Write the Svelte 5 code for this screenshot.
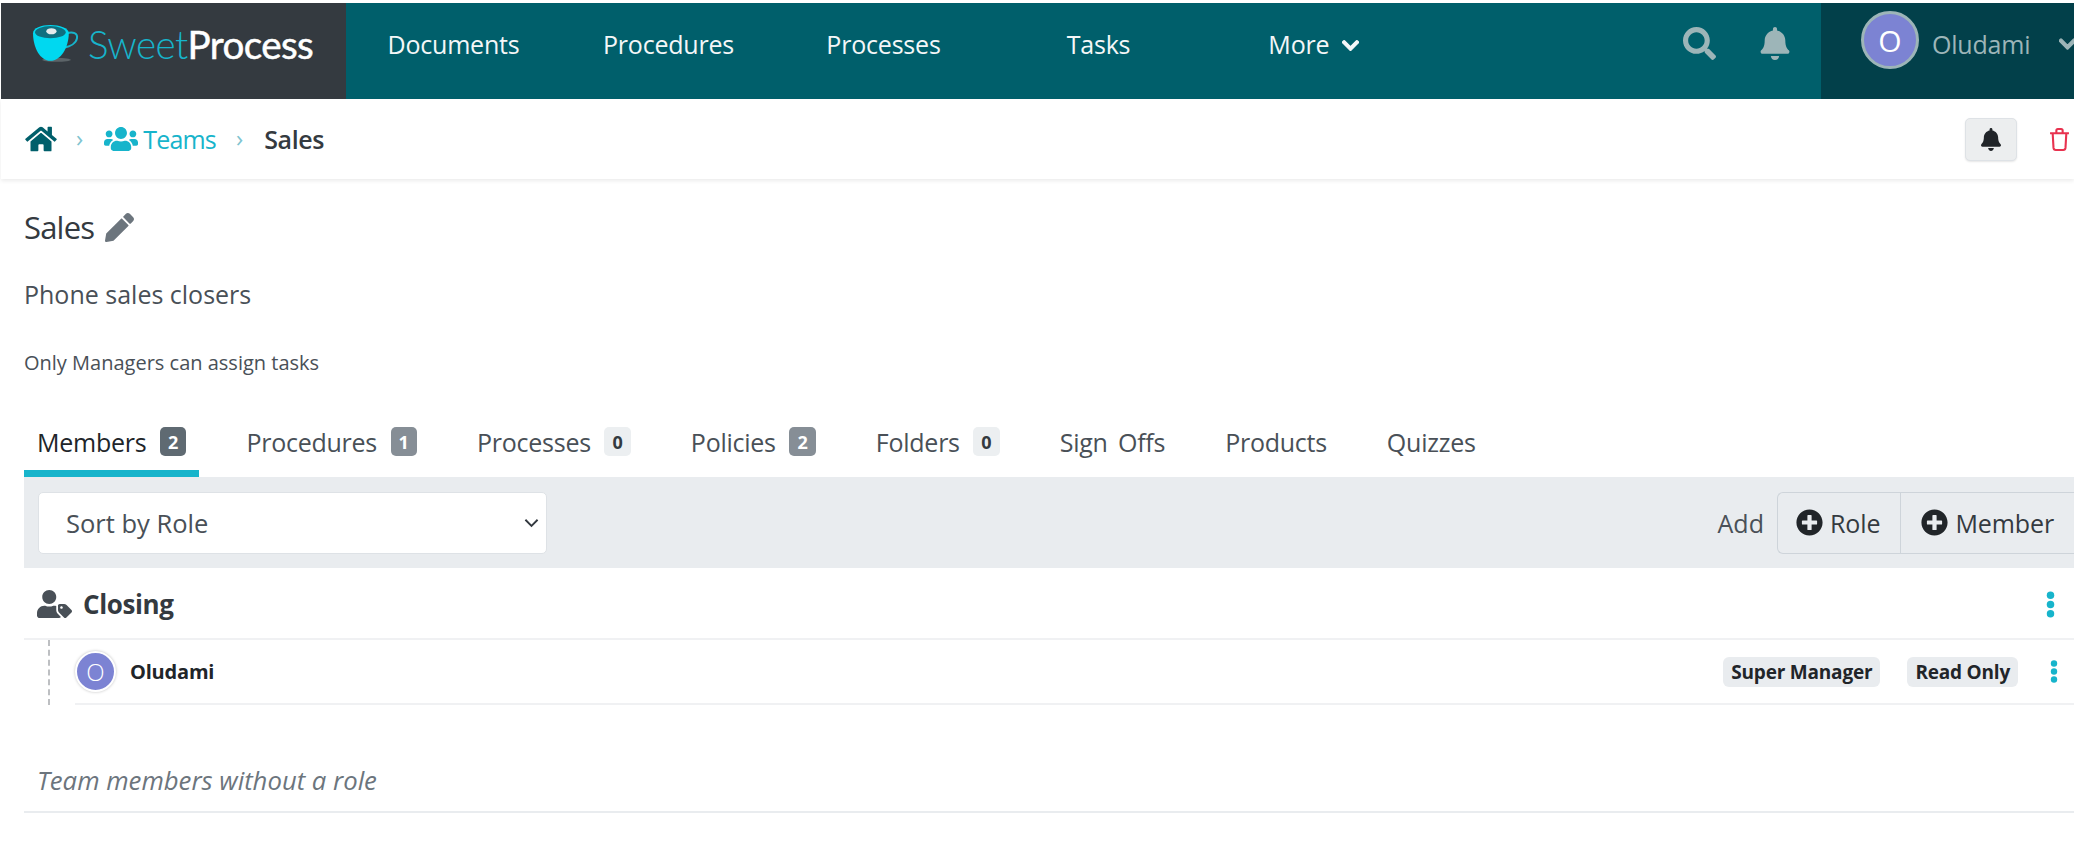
<script lang="ts">
  const paths: Record<string, [number, string]> = {
    home: [576, "M280.37 148.26L96 300.11V464a16 16 0 0 0 16 16l112.06-.29a16 16 0 0 0 15.92-16V368a16 16 0 0 1 16-16h64a16 16 0 0 1 16 16v95.64a16 16 0 0 0 16 16.05L464 480a16 16 0 0 0 16-16V300L295.67 148.26a12.19 12.19 0 0 0-15.3 0zM571.6 251.47L488 182.56V44.05a12 12 0 0 0-12-12h-56a12 12 0 0 0-12 12v72.61L318.47 43a48 48 0 0 0-61 0L4.34 251.47a12 12 0 0 0-1.6 16.9l25.5 31A12 12 0 0 0 45.15 301l235.22-193.74a12.19 12.19 0 0 1 15.3 0L530.9 301a12 12 0 0 0 16.9-1.6l25.5-31a12 12 0 0 0-1.7-16.93z"],
    users: [640, "M96 224c35.3 0 64-28.7 64-64s-28.7-64-64-64-64 28.7-64 64 28.7 64 64 64zm448 0c35.3 0 64-28.7 64-64s-28.7-64-64-64-64 28.7-64 64 28.7 64 64 64zm32 32h-64c-17.6 0-33.5 7.1-45.1 18.6 40.3 22.1 68.9 62 75.1 109.4h66c17.7 0 32-14.3 32-32v-32c0-35.3-28.7-64-64-64zm-256 0c61.9 0 112-50.1 112-112S381.9 32 320 32 208 82.1 208 144s50.1 112 112 112zm76.8 32h-8.3c-20.8 10-43.9 16-68.5 16s-47.6-6-68.5-16h-8.3C179.6 288 128 339.6 128 403.2V432c0 26.5 21.5 48 48 48h288c26.5 0 48-21.5 48-48v-28.8c0-63.6-51.6-115.2-115.2-115.2zm-223.7-13.4C161.5 263.1 145.6 256 128 256H64c-35.3 0-64 28.7-64 64v32c0 17.7 14.3 32 32 32h65.9c6.3-47.4 34.9-87.3 75.2-109.4z"],
    bell: [448, "M224 512c35.32 0 63.97-28.65 63.97-64H160.03c0 35.35 28.65 64 63.97 64zm215.39-149.71c-19.32-20.76-55.47-51.99-55.47-154.29 0-77.7-54.48-139.9-127.94-155.16V32c0-17.67-14.32-32-31.98-32s-31.98 14.33-31.98 32v20.84C118.56 68.1 64.08 130.3 64.08 208c0 102.3-36.15 133.53-55.47 154.29-6 6.45-8.66 14.16-8.61 21.71.11 16.4 12.98 32 32.1 32h383.8c19.12 0 32-15.6 32.1-32 .05-7.55-2.61-15.27-8.61-21.71z"],
    search: [512, "M505 442.7L405.3 343c-4.5-4.5-10.6-7-17-7H372c27.6-35.3 44-79.7 44-128C416 93.1 322.9 0 208 0S0 93.1 0 208s93.1 208 208 208c48.3 0 92.7-16.4 128-44v16.3c0 6.4 2.5 12.5 7 17l99.7 99.7c9.4 9.4 24.6 9.4 33.9 0l28.3-28.3c9.4-9.4 9.4-24.6.1-34zM208 336c-70.7 0-128-57.2-128-128 0-70.7 57.2-128 128-128 70.7 0 128 57.2 128 128 0 70.7-57.2 128-128 128z"],
    pencil: [512, "M497.9 142.1l-46.1 46.1c-4.7 4.7-12.3 4.7-17 0l-111-111c-4.7-4.7-4.7-12.3 0-17l46.1-46.1c18.7-18.7 49.1-18.7 67.9 0l60.1 60.1c18.8 18.7 18.8 49.1 0 67.9zM284.2 99.8L21.6 362.4.4 483.9c-2.9 16.4 11.4 30.6 27.8 27.8l121.5-21.3 262.6-262.6c4.7-4.7 4.7-12.3 0-17l-111-111c-4.8-4.7-12.4-4.7-17.1 0z"],
    plus: [512, "M256 8C119 8 8 119 8 256s111 248 248 248 248-111 248-248S393 8 256 8zm144 276c0 6.6-5.4 12-12 12h-92v92c0 6.6-5.4 12-12 12h-56c-6.6 0-12-5.4-12-12v-92h-92c-6.6 0-12-5.4-12-12v-56c0-6.6 5.4-12 12-12h92v-92c0-6.6 5.4-12 12-12h56c6.6 0 12 5.4 12 12v92h92c6.6 0 12 5.4 12 12v56z"],
    usertag: [640, "M630.6 364.9l-90.3-90.2c-12-12-28.3-18.7-45.3-18.7h-79.3c-17.7 0-32 14.3-32 32v79.2c0 17 6.7 33.2 18.7 45.2l90.3 90.2c12.5 12.5 32.8 12.5 45.3 0l92.5-92.5c12.6-12.5 12.6-32.7.1-45.2zm-182.8-21c-13.3 0-24-10.7-24-24s10.7-24 24-24 24 10.7 24 24c0 13.2-10.7 24-24 24zm-223.8-88c70.7 0 128-57.3 128-128C352 57.3 294.7 0 224 0S96 57.3 96 128c0 70.6 57.3 127.9 128 127.9zm127.8 111.2V294c-12.2-3.6-24.9-6.2-38.2-6.2h-16.7c-22.2 10.2-46.9 16-72.9 16s-50.6-5.8-72.9-16h-16.7C60.2 288 0 348.2 0 422.4V464c0 26.5 21.5 48 48 48h352c15.5 0 29.1-7.5 37.9-18.9l-58-58c-18.1-18.1-28.1-42.2-28.1-67.9z"],
    chevron: [448, "M207.029 381.476L12.686 187.132c-9.373-9.373-9.373-24.569 0-33.941l22.667-22.667c9.357-9.357 24.522-9.375 33.901-.04L224 284.505l154.745-154.021c9.379-9.335 24.544-9.317 33.901.04l22.667 22.667c9.373 9.373 9.373 24.569 0 33.941L240.971 381.476c-9.373 9.372-24.569 9.372-33.942 0z"],
  };

  const navItems = ["Documents", "Procedures", "Processes", "Tasks"];

  const tabs = [
    { label: "Members", count: 2, tone: "dark", active: true },
    { label: "Procedures", count: 1, tone: "mid" },
    { label: "Processes", count: 0, tone: "light" },
    { label: "Policies", count: 2, tone: "mid" },
    { label: "Folders", count: 0, tone: "light" },
    { label: "Sign Offs" },
    { label: "Products" },
    { label: "Quizzes" },
  ];
</script>

{#snippet icon(name: string, cls: string)}
  <svg class={cls} viewBox="0 0 {paths[name][0]} 512" fill="currentColor" aria-hidden="true"><path d={paths[name][1]} /></svg>
{/snippet}

{#snippet kebab(cls: string)}
  <svg class="kebab {cls}" viewBox="0 0 8 26" fill="currentColor" aria-hidden="true">
    <circle cx="4" cy="4" r="3.6" /><circle cx="4" cy="13" r="3.6" /><circle cx="4" cy="22" r="3.6" />
  </svg>
{/snippet}

<div class="page">
  <header class="nav">
    <div class="brand">
      <svg class="cup" viewBox="0 0 46 38" aria-hidden="true">
        <ellipse cx="24" cy="34" rx="14" ry="2" fill="#5c6468" />
        <path d="M34 8c6-2 11 0 10 5-1 5-7 8-12 9" fill="none" stroke="#17b4cb" stroke-width="2" />
        <path d="M1 8c0-5 8-8 17-8s18 3 18 8c0 14-8 27-18 27S1 22 1 8z" fill="#00d8f0" />
        <ellipse cx="18" cy="7" rx="15" ry="6" fill="#0f6f80" />
        <ellipse cx="19" cy="6" rx="5" ry="3" fill="#e4eaec" />
      </svg>
      <span class="word"><span class="sweet">Sweet</span><span class="process">Process</span></span>
    </div>
    <nav class="links">
      {#each navItems as item}
        <a class="link" href="#top">{item}</a>
      {/each}
      <a class="link" href="#top">More {@render icon("chevron", "more-chev")}</a>
    </nav>
    <div class="nav-icons">
      {@render icon("search", "nav-search")}
      {@render icon("bell", "nav-bell")}
    </div>
    <div class="user">
      <span class="avatar">O</span>
      <span class="user-name">Oludami</span>
      {@render icon("chevron", "user-chev")}
    </div>
  </header>

  <div class="crumbs">
    {@render icon("home", "home")}
    <span class="sep">›</span>
    {@render icon("users", "teams-icon")}
    <a class="teams" href="#top">Teams</a>
    <span class="sep second">›</span>
    <span class="current">Sales</span>
    <button class="bell-btn" aria-label="Subscribe">{@render icon("bell", "btn-bell")}</button>
    <svg class="trash" viewBox="0 0 20 22" fill="none" stroke="currentColor" stroke-width="2" aria-hidden="true">
      <path d="M1 5h18M7 5V2.5C7 1.7 7.7 1 8.5 1h3c.8 0 1.500.7 1.500 1.500V5M3.500 5l.8 14c.1 1.100 1 2 2.100 2h7.200c1.100 0 2-.9 2.100-2l.8-14" />
    </svg>
  </div>

  <main class="content">
    <h1 class="title">Sales {@render icon("pencil", "pencil")}</h1>
    <p class="desc">Phone sales closers</p>
    <p class="note">Only Managers can assign tasks</p>

    <ul class="tabs">
      {#each tabs as tab}
        <li class="tab" class:active={tab.active}>
          {tab.label}
          {#if tab.count !== undefined}<span class="count {tab.tone}">{tab.count}</span>{/if}
        </li>
      {/each}
    </ul>

    <div class="toolbar">
      <select class="sort">
        <option>Sort by Role</option>
      </select>
      <span class="add">Add</span>
      <div class="btn-group">
        <button class="btn">{@render icon("plus", "plus")} Role</button>
        <button class="btn">{@render icon("plus", "plus")} Member</button>
      </div>
    </div>

    <div class="role">
      {@render icon("usertag", "role-icon")}
      <strong class="role-name">Closing</strong>
      {@render kebab("role-kebab")}
    </div>

    <div class="member-wrap">
      <div class="member">
        <span class="avatar small">O</span>
        <span class="member-name">Oludami</span>
        <span class="tag">Super Manager</span>
        <span class="tag">Read Only</span>
        {@render kebab("member-kebab")}
      </div>
    </div>

    <div class="no-role">Team members without a role</div>
  </main>
</div>

<style>
  :global(body) {
    margin: 0;
    background: #fff;
  }
  .page {
    width: 2074px;
    padding: 3px 0 0 1px;
    box-sizing: border-box;
    overflow: hidden;
    font-family: "Open Sans", "Noto Sans", sans-serif;
    color: #343a40;
  }
  .nav {
    display: flex;
    align-items: stretch;
    height: 96px;
    background: #005f6b;
  }
  .brand {
    width: 345px;
    flex: none;
    background: #343a40;
    display: flex;
    align-items: center;
    padding: 0 0 14px 31px;
    box-sizing: border-box;
    gap: 9px;
  }
  .cup {
    width: 47px;
    height: 39px;
    flex: none;
  }
  .word {
    font-family: Lato, sans-serif;
    font-size: 38.6px;
    letter-spacing: -0.6px;
  }
  .sweet {
    color: #17b4cb;
    font-weight: 300;
  }
  .process {
    color: #fff;
    font-weight: 400;
    -webkit-text-stroke: 0.5px #fff;
  }
  .links {
    display: flex;
    align-items: center;
  }
  .link {
    width: 215px;
    text-align: center;
    color: #f4f7f8;
    text-decoration: none;
    font-size: 25px;
    letter-spacing: -0.2px;
    padding-bottom: 15px;
  }
  .more-chev {
    width: 17px;
    height: 19px;
    margin-left: 6px;
    vertical-align: -1px;
    stroke: currentColor;
    stroke-width: 30;
  }
  .nav-icons {
    margin-left: auto;
    display: flex;
    align-items: center;
    gap: 44px;
    padding: 0 31px 16px 0;
    color: #9db5b8;
  }
  .nav-search {
    width: 33px;
    height: 33px;
  }
  .nav-bell {
    width: 30px;
    height: 33px;
  }
  .user {
    width: 253px;
    flex: none;
    background: #02404a;
    display: flex;
    align-items: center;
    padding: 0 0 15px 40px;
    box-sizing: border-box;
    color: #9db5b8;
  }
  .avatar {
    width: 52px;
    height: 52px;
    border: 3px solid #9db5b8;
    border-radius: 50%;
    background: #7c83d3;
    color: #fff;
    display: flex;
    align-items: center;
    justify-content: center;
    font-size: 30px;
    flex: none;
  }
  .user .avatar {
    margin-bottom: 7px;
  }
  .user-name {
    font-size: 25px;
    letter-spacing: -0.2px;
    margin-left: 13px;
  }
  .user-chev {
    width: 17px;
    height: 20px;
    margin-left: 29px;
    flex: none;
    stroke: currentColor;
    stroke-width: 30;
  }
  .crumbs {
    display: flex;
    align-items: center;
    height: 80px;
    padding: 0 4px 0 24px;
    box-shadow: 0 2px 4px rgba(0, 0, 0, 0.08);
    font-size: 25px;
  }
  .home {
    width: 32px;
    height: 28px;
    color: #005f6b;
  }
  .sep {
    color: #7fc4d0;
    font-size: 24px;
    margin: 0 21px 4px 19px;
  }
  .sep.second {
    margin: 0 21px 4px 20px;
  }
  .teams-icon {
    width: 34px;
    height: 28px;
    color: #17b4cb;
  }
  .teams {
    color: #17b4cb;
    text-decoration: none;
    margin-left: 5px;
    letter-spacing: -0.8px;
  }
  .current {
    font-weight: 600;
    letter-spacing: -0.4px;
  }
  .bell-btn {
    margin-left: auto;
    width: 52px;
    height: 43px;
    background: #eceeef;
    border: 1px solid #dee2e6;
    border-radius: 5px;
    padding: 0;
    color: #212529;
    box-shadow: 0 1px 2px rgba(0, 0, 0, 0.1);
  }
  .btn-bell {
    width: 20px;
    height: 23px;
    vertical-align: middle;
  }
  .trash {
    width: 21px;
    height: 25px;
    color: #e8324f;
    margin-left: 32px;
  }
  .content {
    padding: 0 0 0 23px;
  }
  .title {
    margin: 30px 0 0;
    font-size: 31px;
    font-weight: 400;
    line-height: 36px;
    letter-spacing: -0.8px;
    display: flex;
    align-items: center;
    gap: 11px;
  }
  .pencil {
    width: 29px;
    height: 29px;
    color: #6c757d;
  }
  .desc {
    margin: 31px 0 0;
    font-size: 25px;
    line-height: 36px;
    color: #495057;
  }
  .note {
    margin: 36px 0 0;
    font-size: 20px;
    line-height: 30px;
    color: #495057;
  }
  .tabs {
    list-style: none;
    display: flex;
    gap: 34px;
    margin: 36px 0 0;
    padding: 0;
    font-size: 25px;
    letter-spacing: -0.25px;
    word-spacing: 4px;
    color: #495057;
  }
  .tab {
    display: flex;
    align-items: center;
    gap: 13.5px;
    height: 63px;
    padding: 0 13px 1px;
    box-sizing: border-box;
    border-bottom: 7px solid transparent;
  }
  .tab.active {
    color: #212529;
    border-bottom-color: #17b4cb;
  }
  .count {
    width: 26.5px;
    height: 29px;
    border-radius: 5px;
    display: flex;
    align-items: center;
    justify-content: center;
    font-size: 18px;
    font-weight: 700;
    letter-spacing: 0;
    color: #fff;
  }
  .count.dark {
    background: #5f6a72;
  }
  .count.mid {
    background: #868e96;
  }
  .count.light {
    background: #eceff1;
    color: #343a40;
  }
  .toolbar {
    display: flex;
    align-items: center;
    height: 91px;
    padding: 0 0 0 14px;
    background: #e9ecef;
    box-sizing: border-box;
  }
  .sort {
    appearance: none;
    width: 509px;
    height: 62px;
    padding: 0 27px;
    border: 1px solid #dee2e6;
    border-radius: 5px;
    background: #fff url("data:image/svg+xml,%3Csvg xmlns='http://www.w3.org/2000/svg' viewBox='0 0 16 10'%3E%3Cpath d='M1.500 1.500L8 8l6.500-6.500' fill='none' stroke='%23343a40' stroke-width='2'/%3E%3C/svg%3E") no-repeat right 7px top 25px / 15px 10px;
    color: #495057;
    font-family: inherit;
    font-size: 25.5px;
  }
  .add {
    margin-left: auto;
    font-size: 25px;
    margin-right: 13px;
    color: #495057;
  }
  .btn-group {
    display: flex;
    height: 62px;
    border: 1px solid #ced4da;
    border-radius: 6px 0 0 6px;
    border-right: 0;
    box-sizing: border-box;
  }
  .btn {
    background: none;
    border: 0;
    border-right: 1px solid #ced4da;
    padding: 0 20px;
    font-family: inherit;
    font-size: 25px;
    letter-spacing: -0.1px;
    color: #343a40;
    display: flex;
    align-items: center;
    gap: 7px;
  }
  .btn:first-child {
    padding-left: 18px;
  }
  .btn:last-child {
    border-right: 0;
  }
  .plus {
    width: 27px;
    height: 27px;
    color: #212529;
  }
  .role {
    display: flex;
    align-items: center;
    height: 72px;
    padding: 2px 19px 0 13px;
    box-sizing: border-box;
    border-bottom: 2px solid #f0f1f3;
  }
  .role-icon {
    width: 35px;
    height: 28px;
    color: #495057;
  }
  .role-name {
    font-size: 26px;
    letter-spacing: -0.4px;
    margin-left: 11px;
    font-weight: 700;
    color: #343a40;
  }
  .kebab {
    color: #17b4cb;
    margin-left: auto;
  }
  .role-kebab {
    width: 9px;
    height: 27px;
  }
  .member-wrap {
    margin-left: 24px;
    padding-left: 25px;
    border-left: 2px dashed #bdbfc2;
    height: 65px;
    box-sizing: border-box;
  }
  .member {
    display: flex;
    align-items: center;
    height: 65px;
    box-sizing: border-box;
    border-bottom: 2px solid #f0f1f3;
    padding: 0 16px 0 0;
  }
  .avatar.small {
    width: 37px;
    height: 37px;
    border: 2px solid #fff;
    box-shadow: 0 0 3px rgba(0, 0, 0, 0.25);
    font-size: 24px;
    font-weight: 300;
  }
  .member-name {
    font-size: 20px;
    font-weight: 700;
    letter-spacing: -0.2px;
    margin-left: 14px;
    color: #212529;
  }
  .tag {
    background: #e9ecef;
    border-radius: 6px;
    height: 30px;
    padding: 0 8px;
    display: flex;
    align-items: center;
    font-size: 19px;
    font-weight: 700;
    letter-spacing: -0.2px;
    color: #212529;
    margin-left: 27px;
  }
  .member .tag:nth-of-type(3) {
    margin-left: auto;
  }
  .member-kebab {
    width: 8px;
    height: 23px;
    margin-left: 32px;
  }
  .no-role {
    margin-top: 42px;
    height: 66px;
    padding: 16px 0 0 13px;
    box-sizing: border-box;
    font-style: italic;
    font-size: 25.7px;
    color: #6c757d;
    border-bottom: 2px solid #e9ecef;
  }
</style>
